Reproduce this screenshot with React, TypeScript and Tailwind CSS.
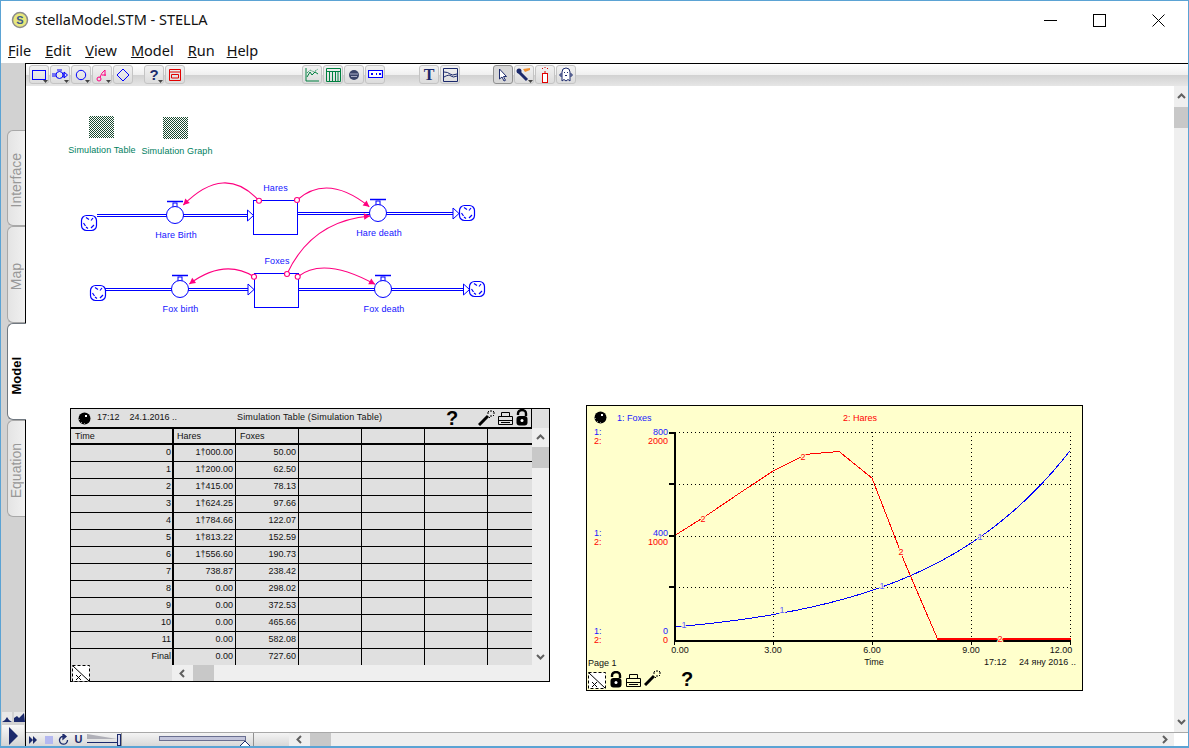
import React from "react";

const SANS = "font-['Liberation_Sans',Arial,sans-serif]";

function Chevron({ dir, className = "" }: { dir: "up" | "down" | "left" | "right"; className?: string }) {
  const pts = {
    up: "1,6 4.5,2.5 8,6",
    down: "1,3 4.5,6.5 8,3",
    left: "6,1 2.5,4.5 6,8",
    right: "3,1 6.5,4.5 3,8",
  }[dir];
  return (
    <svg width="9" height="9" viewBox="0 0 9 9" className={className}>
      <polyline points={pts} fill="none" stroke="#606060" strokeWidth="2" />
    </svg>
  );
}

function ToolBtn({ children, menu, pressed }: { children: React.ReactNode; menu?: boolean; pressed?: boolean }) {
  return (
    <div
      className={
        pressed
          ? "relative flex h-[19px] w-[20px] items-center justify-center rounded-[3px] border border-[#909090] bg-[#d8d8d8]"
          : "relative flex h-[19px] w-[20px] items-center justify-center rounded-[3px] border border-[#c4c4c4] bg-gradient-to-b from-[#f2f2f2] to-[#dcdcdc]"
      }
    >
      {children}
      {menu && (
        <svg width="5" height="3" viewBox="0 0 5 3" className="absolute bottom-0 right-0">
          <polygon points="0,0 5,0 2.5,3" fill="#444" />
        </svg>
      )}
    </div>
  );
}

function Wand({ className = "" }: { className?: string }) {
  return (
    <svg width="17" height="16" viewBox="0 0 17 16" className={className}>
      <line x1="1" y1="15" x2="10" y2="6" stroke="#000" strokeWidth="3" />
      <path d="M13 0v2M13 5v2M9 3h2M15 3h2M10 1l1 1M15 1l1 1M15 5l1 1M11 7l1 1" stroke="#000" strokeWidth="1" fill="none" />
    </svg>
  );
}

function Printer({ className = "" }: { className?: string }) {
  return (
    <svg width="15" height="13" viewBox="0 0 15 13" className={className}>
      <path d="M3.5 4.5V.5h8v4M.5 4.5h14v8H.5zM.5 8.5h14M3 10.5h9" fill="none" stroke="#000" strokeWidth="1" />
    </svg>
  );
}

function Lock({ className = "" }: { className?: string }) {
  return (
    <svg width="12" height="17" viewBox="0 0 12 17" className={className}>
      <path d="M2 6V4.5a4 3.5 0 0 1 8 0V7" fill="none" stroke="#000" strokeWidth="2.4" />
      <rect x="0.5" y="7" width="11" height="9.5" rx="3" fill="#000" />
      <circle cx="6" cy="11.5" r="1.5" fill="#fff" />
    </svg>
  );
}

function Corner({ className = "" }: { className?: string }) {
  return (
    <svg width="18" height="17" viewBox="0 0 18 17" className={className}>
      <rect x="0.5" y="0.5" width="17" height="16" fill="#fff" stroke="#000" strokeDasharray="3 2" />
      <line x1="1" y1="1" x2="17" y2="16" stroke="#000" />
      <path d="M4 10l5 5M9 10l-5 5" stroke="#000" fill="none" />
    </svg>
  );
}

function Clock({ className = "" }: { className?: string }) {
  return (
    <svg width="13" height="13" viewBox="0 0 13 13" className={className}>
      <circle cx="6.5" cy="6.5" r="6" fill="#000" />
      <rect x="7" y="3" width="2" height="2" fill="#fff" />
      <rect x="3" y="10" width="1" height="1" fill="#888" />
      <rect x="6" y="11" width="1" height="1" fill="#888" />
      <rect x="1" y="7" width="1" height="1" fill="#888" />
    </svg>
  );
}

const rows = [
  ["0", "1†000.00", "50.00"],
  ["1", "1†200.00", "62.50"],
  ["2", "1†415.00", "78.13"],
  ["3", "1†624.25", "97.66"],
  ["4", "1†784.66", "122.07"],
  ["5", "1†813.22", "152.59"],
  ["6", "1†556.60", "190.73"],
  ["7", "738.87", "238.42"],
  ["8", "0.00", "298.02"],
  ["9", "0.00", "372.53"],
  ["10", "0.00", "465.66"],
  ["11", "0.00", "582.08"],
  ["Final", "0.00", "727.60"],
];

function TableRow({ row, last }: { row: string[]; last: boolean }) {
  return (
    <div className={last ? "flex h-[16px] leading-[15px]" : "flex h-[17px] border-b border-black leading-[15px]"}>
      <div className="w-[103px] border-r-2 border-black pr-px text-right">{row[0]}</div>
      <div className="w-[62px] border-r border-black pr-[2px] text-right">{row[1]}</div>
      <div className="w-[63px] border-r border-black pr-[2px] text-right">{row[2]}</div>
      <div className="w-[63px] border-r border-black" />
      <div className="w-[63px] border-r border-black" />
      <div className="w-[63px] border-r border-black" />
      <div className="flex-1" />
    </div>
  );
}

function SimTable() {
  return (
    <div className={`absolute left-[44px] top-[322px] h-[274px] w-[480px] border border-black bg-[#e0e0e0] text-[9px] text-[#111] ${SANS}`}>
      <div className="flex h-[256px]">
        <div className="flex w-[461px] flex-col">
          <div className="relative flex h-[18px] items-center border-r border-black pl-[7px]">
            <Clock />
            <span className="ml-[6px] whitespace-pre">17:12    24.1.2016 ..</span>
            <span className="ml-[60px] tracking-[0.14px]">Simulation Table (Simulation Table)</span>
            <span className="absolute left-[375px] top-[-3px] text-[20px] font-bold leading-[24px] text-black">?</span>
            <Wand className="absolute left-[407px] top-px" />
            <Printer className="absolute left-[427px] top-[3px]" />
            <Lock className="absolute left-[445px] top-0" />
          </div>
          <div className="flex h-[18px] border-y-2 border-black leading-[14px]">
            <div className="w-[103px] border-r-2 border-black pl-[4px]">Time</div>
            <div className="w-[62px] border-r border-black pl-[3px]">Hares</div>
            <div className="w-[63px] border-r border-black pl-[4px]">Foxes</div>
            <div className="w-[63px] border-r border-black" />
            <div className="w-[63px] border-r border-black" />
            <div className="w-[63px] border-r border-black" />
            <div className="flex-1" />
          </div>
          {rows.map((r, i) => (
            <TableRow key={r[0]} row={r} last={i === rows.length - 1} />
          ))}
        </div>
        <div className="flex flex-1 flex-col">
          <div className="h-[19px] bg-[#e0e0e0]" />
          <div className="flex flex-1 flex-col items-center bg-[#efefef]">
            <div className="flex h-[19px] items-center">
              <Chevron dir="up" />
            </div>
            <div className="h-[21px] w-full bg-[#c8c8c8]" />
            <div className="flex flex-1 items-end pb-[4px]">
              <Chevron dir="down" />
            </div>
          </div>
        </div>
      </div>
      <div className="flex h-[16px]">
        <div className="w-[101px] pl-px">
          <Corner />
        </div>
        <div className="flex flex-1 bg-[#efefef]">
          <div className="flex w-[21px] items-center justify-center">
            <Chevron dir="left" />
          </div>
          <div className="w-[21px] bg-[#c8c8c8]" />
        </div>
      </div>
    </div>
  );
}

const BLUE = "#0000ff";
const PINK = "#ff0080";

function Cloud({ x, y }: { x: number; y: number }) {
  return (
    <g stroke={BLUE} fill="#fff" strokeWidth="1.2">
      <rect x={x + 0.5} y={y + 0.5} width="15" height="15" rx="5" />
      <path
        d={`M${x + 5} ${y + 2.5}l3 2M${x + 12} ${y + 3}l-2 2.5M${x + 2.5} ${y + 8}l2 3M${x + 10} ${y + 13}l3 -3M${x + 7} ${y + 13.5}l-2 -1.5`}
        fill="none"
      />
    </g>
  );
}

function Valve({ x, y, top }: { x: number; y: number; top: number }) {
  return (
    <g stroke={BLUE} fill="#fff" strokeWidth="1">
      <path d={`M${x - 8} ${top + 0.5}h16`} strokeWidth="1.5" fill="none" />
      <rect x={x - 2} y={top + 2} width="4" height={y - top - 9} />
      <circle cx={x} cy={y} r="8.5" />
    </g>
  );
}

function Flow({ x1, x2, y }: { x1: number; x2: number; y: number }) {
  return <path d={`M${x1} ${y - 1}H${x2}M${x1} ${y + 1}H${x2}`} stroke={BLUE} strokeWidth="1" fill="none" shapeRendering="crispEdges" />;
}

function Head({ x, y, hw }: { x: number; y: number; hw: number }) {
  return <polygon points={`${x},${y - hw} ${x + 6},${y} ${x},${y + hw}`} fill="#fff" stroke={BLUE} strokeWidth="1" />;
}

function Connector({ s, c, e }: { s: number[]; c: number[]; e: number[] }) {
  const dx = e[0] - c[0];
  const dy = e[1] - c[1];
  const len = Math.hypot(dx, dy);
  const ux = dx / len;
  const uy = dy / len;
  const bx = e[0] - ux * 6;
  const by = e[1] - uy * 6;
  const points = `${e[0]},${e[1]} ${bx - uy * 3.2},${by + ux * 3.2} ${bx + uy * 3.2},${by - ux * 3.2}`;
  return (
    <g>
      <path d={`M${s[0]} ${s[1]}Q${c[0]} ${c[1]} ${e[0]} ${e[1]}`} fill="none" stroke={PINK} strokeWidth="1.1" />
      <polygon points={points} fill={PINK} />
      <circle cx={s[0]} cy={s[1]} r="2.5" fill="#fff" stroke={PINK} strokeWidth="1.1" />
    </g>
  );
}

function Diagram() {
  const labels: [string, number, number][] = [
    ["Hares", 275.5, 191],
    ["Hare Birth", 176, 238],
    ["Hare death", 379, 236],
    ["Foxes", 277, 264],
    ["Fox birth", 180.5, 312],
    ["Fox death", 384, 312],
  ];
  return (
    <svg width="1148" height="646" viewBox="26 86 1148 646" className="absolute left-0 top-0">
      <defs>
        <pattern id="dither" width="2" height="2" patternUnits="userSpaceOnUse">
          <rect width="2" height="2" fill="#fff" />
          <rect width="1" height="1" fill="#1a4a30" />
          <rect x="1" y="1" width="1" height="1" fill="#1a4a30" />
        </pattern>
      </defs>
      <rect x="89" y="116" width="25" height="22" fill="url(#dither)" />
      <rect x="163" y="117" width="25" height="22" fill="url(#dither)" />
      <g fontFamily="'Liberation Sans',Arial,sans-serif" fontSize="9" letterSpacing="0.1">
        <text x="102" y="153" textAnchor="middle" fill="#008060">Simulation Table</text>
        <text x="177" y="154" textAnchor="middle" fill="#008060">Simulation Graph</text>
        {labels.map(([t, x, y]) => (
          <text key={t} x={x} y={y} textAnchor="middle" fill="#1414ff">{t}</text>
        ))}
      </g>

      <Flow x1={97} x2={248} y={215.5} />
      <Flow x1={298} x2={454} y={213.5} />
      <Flow x1={105} x2={248} y={289.5} />
      <Flow x1={299} x2={464} y={289.5} />
      <Head x={247.5} y={215.5} hw={5.5} />
      <Head x={453} y={213.5} hw={5.5} />
      <Head x={248} y={289.5} hw={5.5} />
      <Head x={463.5} y={289.5} hw={5.5} />
      <Cloud x={81} y={215} />
      <Cloud x={459} y={205} />
      <Cloud x={90} y={285} />
      <Cloud x={469} y={281} />
      <rect x="253.5" y="200.5" width="44" height="34" fill="#fff" stroke={BLUE} shapeRendering="crispEdges" />
      <rect x="254.5" y="273.5" width="44" height="34" fill="#fff" stroke={BLUE} shapeRendering="crispEdges" />
      <Valve x={175} y={215} top={201} />
      <Valve x={378} y={213} top={199} />
      <Valve x={180} y={289} top={275} />
      <Valve x={383} y={289} top={275} />
      <Connector s={[259, 200.7]} c={[224.8, 163]} e={[183.3, 205]} />
      <Connector s={[297, 200]} c={[327.5, 173]} e={[369.3, 206.7]} />
      <Connector s={[287, 274]} c={[311.5, 221]} e={[370, 216]} />
      <Connector s={[254, 276.7]} c={[224.3, 258]} e={[189.3, 284]} />
      <Connector s={[297.7, 276.7]} c={[323.6, 256]} e={[375, 284.3]} />
    </svg>
  );
}

function Chart() {
  const tx = (t: number) => 674 + t * 33;
  const foxes = Array.from({ length: 49 }, (_, i) => {
    const t = i / 4;
    return `${tx(t)},${640 - 50 * Math.pow(1.25, t) * 0.26}`;
  }).join(" ");
  const hares = [1000, 1200, 1415, 1624.25, 1784.66, 1813.22, 1556.6, 738.87, 0]
    .map((v, i) => `${tx(i)},${640 - v * 0.104}`)
    .join(" ");
  const hy = [432.5, 484.5, 536.5, 587.5];
  const vx = [773.5, 872.5, 971.5, 1070.5];
  const left: [string, number, string][] = [
    ["1:", 435, "#1a1aff"],
    ["2:", 444, "#ff0000"],
    ["1:", 536, "#1a1aff"],
    ["2:", 545, "#ff0000"],
    ["1:", 634, "#1a1aff"],
    ["2:", 643, "#ff0000"],
  ];
  const vals: [string, number, string][] = [
    ["800", 435, "#1a1aff"],
    ["2000", 444, "#ff0000"],
    ["400", 536, "#1a1aff"],
    ["1000", 545, "#ff0000"],
    ["0", 634, "#1a1aff"],
    ["0", 643, "#ff0000"],
  ];
  const xl: [string, number][] = [["0.00", 680], ["3.00", 773], ["6.00", 872], ["9.00", 971], ["12.00", 1061]];
  const ones: number[][] = [[684, 628], [782, 613], [882, 589], [980, 540]];
  const twos: number[][] = [[703, 522], [803, 460], [901, 555], [1000, 642]];
  return (
    <div className="absolute left-[560px] top-[319px] h-[286px] w-[497px] border border-black bg-[#ffffcc]">
      <svg width="495" height="284" viewBox="587 406 495 284" fontFamily="'Liberation Sans',Arial,sans-serif" fontSize="9">
        <text x="617" y="421" fill="#1a1aff">1: Foxes</text>
        <text x="843" y="421" fill="#ff0000">2: Hares</text>
        {left.map(([t, y, c], i) => (
          <text key={i} x="594" y={y} fill={c}>{t}</text>
        ))}
        {vals.map(([t, y, c], i) => (
          <text key={i} x="668" y={y} textAnchor="end" fill={c}>{t}</text>
        ))}
        <g stroke="#000" strokeWidth="1" strokeDasharray="1 3" shapeRendering="crispEdges">
          {hy.map((y) => (
            <line key={y} x1="675" x2="1071" y1={y} y2={y} />
          ))}
          {vx.map((x) => (
            <line key={x} x1={x} x2={x} y1="432" y2="640" />
          ))}
        </g>
        <g stroke="#000" strokeWidth="2" shapeRendering="crispEdges">
          {[433, 484, 536, 587].map((y) => (
            <line key={y} x1="669" x2="675" y1={y} y2={y} />
          ))}
        </g>
        <polyline points={foxes} fill="none" stroke="#0000ff" strokeWidth="1" shapeRendering="crispEdges" />
        <polyline points={hares} fill="none" stroke="#ff0000" strokeWidth="1" shapeRendering="crispEdges" />
        <line x1="938" x2="1071" y1="639" y2="639" stroke="#ff0000" strokeWidth="2" />
        <path d="M674.5 432V641H1071" fill="none" stroke="#000" strokeWidth="2" shapeRendering="crispEdges" />
        <g stroke="#000" strokeWidth="1" shapeRendering="crispEdges">
          {[674.5, 773.5, 872.5, 971.5, 1070.5].map((x) => (
            <line key={x} x1={x} x2={x} y1="640" y2="645" />
          ))}
        </g>
        {ones.map(([x, y]) => (
          <text key={x} x={x} y={y} textAnchor="middle" fill="#5a5aff" stroke="#ffffcc" strokeWidth="2" paintOrder="stroke">1</text>
        ))}
        {twos.map(([x, y]) => (
          <text key={x} x={x} y={y} textAnchor="middle" fill="#ff0000" stroke="#ffffcc" strokeWidth="2" paintOrder="stroke">2</text>
        ))}
        <g fill="#111">
          {xl.map(([t, x]) => (
            <text key={t} x={x} y="653" textAnchor="middle">{t}</text>
          ))}
          <text x="874" y="665" textAnchor="middle">Time</text>
          <text x="588" y="666">Page 1</text>
          <text x="984" y="665">17:12</text>
          <text x="1019" y="665">24 яну 2016 ..</text>
        </g>
        <text x="687" y="686" textAnchor="middle" fontSize="20" fontWeight="700" fill="#000">?</text>
      </svg>
      <Clock className="absolute left-[7px] top-[5px]" />
      <Corner className="absolute left-[1px] top-[266px]" />
      <Lock className="absolute left-[23px] top-[265px]" />
      <Printer className="absolute left-[39px] top-[268px]" />
      <Wand className="absolute left-[57px] top-[264px]" />
    </div>
  );
}

function Toolbar() {
  const Navy = "#1c2a6c";
  return (
    <div className={`flex h-[22px] shrink-0 items-start bg-[linear-gradient(to_bottom,#ffffff_0%,#efefef_50%,#d2d2d2_52%,#e6e6e6_100%)] pl-[3px] pt-[1px] ${SANS}`}>
      <div className="flex gap-px">
        <ToolBtn menu>
          <svg width="16" height="12" viewBox="0 0 16 12"><rect x="1.5" y="1.5" width="13" height="9" fill="none" stroke={BLUE} /></svg>
        </ToolBtn>
        <ToolBtn menu>
          <svg width="16" height="12" viewBox="0 0 16 12">
            <path d="M0 5h4M0 7h4M11 5h2M11 7h2M5 1h5" stroke={BLUE} fill="none" />
            <circle cx="7.5" cy="6" r="3.5" fill="none" stroke={BLUE} />
            <polygon points="12,3 15.5,6 12,9" fill="none" stroke={BLUE} />
          </svg>
        </ToolBtn>
        <ToolBtn menu>
          <svg width="14" height="14" viewBox="0 0 14 14"><circle cx="7" cy="7" r="4.7" fill="none" stroke={BLUE} /></svg>
        </ToolBtn>
        <ToolBtn menu>
          <svg width="14" height="14" viewBox="0 0 14 14">
            <circle cx="4" cy="11" r="2" fill="none" stroke={PINK} />
            <path d="M5 9.5Q6 5 10 2V8M7 7h4" fill="none" stroke={PINK} />
          </svg>
        </ToolBtn>
        <ToolBtn>
          <svg width="14" height="14" viewBox="0 0 14 14"><polygon points="7,1 13,7 7,13 1,7" fill="none" stroke={BLUE} /></svg>
        </ToolBtn>
      </div>
      <div className="ml-[11px] flex gap-px">
        <ToolBtn menu>
          <span className="text-[15px] font-bold leading-none text-[#1c2a6c]">?</span>
        </ToolBtn>
        <ToolBtn>
          <svg width="14" height="12" viewBox="0 0 14 12">
            <path d="M1.5 .5h11v11h-11zM1.5 3h11M3.5 5.5h7v3.5h-7z" fill="none" stroke="#e00000" />
          </svg>
        </ToolBtn>
      </div>
      <div className="ml-[117px] flex gap-px">
        <ToolBtn>
          <svg width="15" height="15" viewBox="0 0 15 15">
            <path d="M1 1v13h13M2 10l3-5 2 3 3-3 3 2" fill="none" stroke="#008040" />
            <path d="M2 6l3-3 4 2 4-3" fill="none" stroke="#008040" strokeDasharray="1 1" />
          </svg>
        </ToolBtn>
        <ToolBtn>
          <svg width="15" height="14" viewBox="0 0 15 14">
            <path d="M.5 .5h14v13H.5zM.5 3.5h14M3.5 3.5v10M6.5 3.5v10M9.5 3.5v10M12 3.5v10" fill="none" stroke="#008040" />
          </svg>
        </ToolBtn>
        <ToolBtn>
          <svg width="12" height="12" viewBox="0 0 12 12">
            <circle cx="6" cy="6" r="5" fill="#3a4468" />
            <path d="M2 5h8M3 7.5h6" stroke="#a8acc4" strokeWidth="1" />
          </svg>
        </ToolBtn>
        <ToolBtn>
          <svg width="15" height="9" viewBox="0 0 15 9">
            <path d="M.5 .5h14v7H.5z" fill="#fff" stroke={BLUE} strokeWidth="1.2" />
            <path d="M3 3h2v2H3zM8 3h1v2H8zM11 3h2v2h-2z" fill={BLUE} />
          </svg>
        </ToolBtn>
      </div>
      <div className="ml-[34px] flex gap-px">
        <ToolBtn>
          <span className="font-['Liberation_Serif',serif] text-[16px] font-bold leading-none" style={{ color: Navy }}>T</span>
        </ToolBtn>
        <ToolBtn>
          <svg width="15" height="14" viewBox="0 0 15 14">
            <path d="M.5 .5h14v13H.5zM1 4q4 0 6 2t7 0M1 9q5-3 7-1t6 0" fill="none" stroke={Navy} />
          </svg>
        </ToolBtn>
      </div>
      <div className="ml-[33px] flex gap-px">
        <ToolBtn pressed>
          <svg width="10" height="14" viewBox="0 0 10 14">
            <path d="M1.5 1v10l2.5-2 2 4 1.5-.7-2-3.800h3z" fill="#fff" stroke={Navy} />
          </svg>
        </ToolBtn>
        <ToolBtn menu>
          <svg width="16" height="15" viewBox="0 0 16 15">
            <path d="M2 4l9 9" stroke="#1c2a6c" strokeWidth="3" />
            <circle cx="3" cy="4" r="2.5" fill="#1c2a6c" />
            <path d="M7 2l7-1v2l-5 2z" fill="#f09030" />
          </svg>
        </ToolBtn>
        <ToolBtn>
          <svg width="10" height="16" viewBox="0 0 10 16">
            <rect x="2.5" y="6.5" width="5" height="9" fill="#fff" stroke="#e00000" />
            <path d="M5 4v2M2 1l1 1M8 1l-1 1M5 0v1" stroke="#e00000" />
          </svg>
        </ToolBtn>
        <ToolBtn>
          <svg width="14" height="15" viewBox="0 0 14 15">
            <path d="M3 14V5a4 4 0 0 1 8 0v9l-2-1.5-2 1.5-2-1.5zM3 7H1v2h2M11 7h2v2h-2" fill="#fff" stroke={Navy} />
            <path d="M5 5h1v1H5zM8 5h1v1H8zM6 8h2v1H6z" fill={Navy} />
          </svg>
        </ToolBtn>
      </div>
    </div>
  );
}

function Tab({ label, h, active }: { label: string; h: string; active?: boolean }) {
  return (
    <div
      className={
        active
          ? `relative z-10 -mr-px ml-[6px] flex items-center justify-center rounded-l-[6px] border-y border-l border-[#707880] bg-white pt-[8px] ${h}`
          : `ml-[6px] flex items-center justify-center rounded-l-[6px] border-y border-l border-[#a8a8a8] bg-gradient-to-r from-[#e4e4e4] to-[#f0f0f0] pt-[5px] ${h}`
      }
    >
      <span
        className={
          active
            ? "rotate-180 text-[13px] font-bold text-black [writing-mode:vertical-rl]"
            : "rotate-180 text-[14px] text-[#989898] [writing-mode:vertical-rl]"
        }
      >
        {label}
      </span>
    </div>
  );
}

function LeftColumn() {
  return (
    <div className={`flex w-[24px] shrink-0 flex-col bg-[#d2d2d2] pt-[67px] ${SANS}`}>
      <Tab label="Interface" h="h-[96px]" />
      <Tab label="Map" h="h-[97px]" />
      <Tab label="Model" h="h-[97px]" active />
      <Tab label="Equation" h="h-[97px]" />
      <div className="mt-auto flex gap-[2px] pl-px">
        <div className="flex h-[10px] w-[10px] items-end bg-[#e8e8e8]">
          <svg width="10" height="7" viewBox="0 0 10 7"><polygon points="0,7 3,5 5,2 7,5 10,7" fill="#1c2a6c" /></svg>
        </div>
        <div className="flex h-[10px] w-[11px] items-end bg-[#e8e8e8]">
          <svg width="11" height="9" viewBox="0 0 11 9"><polygon points="0,9 0,5 3,3 5,5 10,0 11,9" fill="#1c2a6c" /></svg>
        </div>
      </div>
      <div className="ml-px mt-[3px] flex h-[21px] w-[22px] items-center justify-center bg-gradient-to-b from-[#f8f8f8] to-[#d4d4d4]">
        <svg width="11" height="18" viewBox="0 0 11 18"><polygon points="1,0 10,9 1,18" fill="#1c2a6c" /></svg>
      </div>
    </div>
  );
}

function BottomBar() {
  const Navy = "#1c2a6c";
  const cell = "flex h-full w-[15px] items-center justify-center";
  return (
    <div className="flex h-[14px] shrink-0 border-t border-[#a8a8a8] bg-gradient-to-b from-[#f4f4f4] to-[#d8d8d8]">
      <div className={cell}>
        <svg width="9" height="8" viewBox="0 0 9 8"><path d="M0 0l4 4-4 4zM4 0l4 4-4 4z" fill={Navy} /></svg>
      </div>
      <div className={cell}>
        <div className="h-[8px] w-[8px] bg-[#b4b8f0]" />
      </div>
      <div className={cell}>
        <svg width="11" height="11" viewBox="0 0 11 11"><path d="M7 2.5A4 4 0 1 0 9.5 6M5 0l3 2.5L5 5z" fill="none" stroke={Navy} strokeWidth="1.3" /></svg>
      </div>
      <div className={cell}>
        <span className="font-['Liberation_Sans',sans-serif] text-[11px] font-bold leading-none text-[#1c2a6c]">U</span>
      </div>
      <div className="flex h-full w-[36px] items-end border-r border-[#909090]">
        <svg width="35" height="13" viewBox="0 0 35 13">
          <polygon points="1,1 31,6 1,6" fill="#b0b0b8" />
          <line x1="1" y1="9.5" x2="31" y2="9.5" stroke={Navy} />
          <rect x="31.5" y="1.5" width="3" height="11" fill="#d8daf0" stroke={Navy} />
        </svg>
      </div>
      <div className="flex h-full w-[132px] items-start border-r border-[#909090] pl-[37px] pt-[3px]">
        <div className="relative h-[5px] w-[87px] border border-[#6a6f90] bg-[#c4c6dc]">
          <svg width="12" height="6" viewBox="0 0 12 6" className="absolute right-[-6px] top-[4px]">
            <polygon points="6,0 11.5,5.5 .5,5.5" fill="#fff" stroke={Navy} />
          </svg>
        </div>
      </div>
      <div className="w-[35px]" />
      <div className="flex flex-1 bg-[#efefef]">
        <div className="flex w-[21px] items-center justify-center">
          <Chevron dir="left" />
        </div>
        <div className="w-[21px] bg-[#c8c8c8]" />
        <div className="flex flex-1 items-center justify-end pr-[5px]">
          <Chevron dir="right" />
        </div>
      </div>
      <div className="w-[14px] bg-white" />
    </div>
  );
}

export default function App() {
  return (
    <div className="flex h-[748px] w-[1189px] flex-col overflow-hidden border-x border-t border-b-2 border-[#5ba3d4] bg-white font-['Noto_Sans','Open_Sans',sans-serif] text-black">
      <div className="flex h-[37px] shrink-0 items-center pl-[10px]">
        <svg width="18" height="18" viewBox="0 0 18 18">
          <circle cx="9" cy="9" r="7.5" fill="#e8e87c" stroke="#8c8c8c" strokeWidth="1.5" />
          <text x="9" y="13" textAnchor="middle" fontFamily="'Liberation Sans',sans-serif" fontWeight="700" fontSize="11" fill="#3c5a8c">S</text>
        </svg>
        <span className="ml-[6px] text-[14.5px] text-[#111]">stellaModel.STM - STELLA</span>
        <div className="ml-auto flex items-center pr-[23px] pt-[2px]">
          <div className="h-px w-[13px] bg-black" />
          <div className="ml-[36px] h-[13px] w-[13px] border border-black" />
          <svg width="13" height="13" viewBox="0 0 13 13" className="ml-[46px]">
            <path d="M.5 .5l12 12M12.5 .5l-12 12" stroke="#000" fill="none" />
          </svg>
        </div>
      </div>
      <div className="flex h-[25px] shrink-0 items-start gap-[14px] pl-[7px] pt-[2px] text-[14.5px] leading-[20px] text-[#111]">
        <span><span className="underline">F</span>ile</span>
        <span><span className="underline">E</span>dit</span>
        <span><span className="underline">V</span>iew</span>
        <span><span className="underline">M</span>odel</span>
        <span className="-mr-[2px]"><span className="underline">R</span>un</span>
        <span><span className="underline">H</span>elp</span>
      </div>
      <div className="flex min-h-0 flex-1">
        <LeftColumn />
        <div className="flex min-w-0 flex-1 flex-col border-l border-t border-black">
          <Toolbar />
          <div className="flex min-h-0 flex-1">
            <div className="relative min-w-0 flex-1 bg-white">
              <Diagram />
              <SimTable />
              <Chart />
            </div>
            <div className="flex w-[14px] shrink-0 flex-col items-center bg-[#efefef]">
              <div className="flex h-[21px] items-center">
                <Chevron dir="up" />
              </div>
              <div className="h-[21px] w-full bg-[#c8c8c8]" />
              <div className="flex flex-1 items-end pb-[6px]">
                <Chevron dir="down" />
              </div>
            </div>
          </div>
          <BottomBar />
        </div>
      </div>
    </div>
  );
}
